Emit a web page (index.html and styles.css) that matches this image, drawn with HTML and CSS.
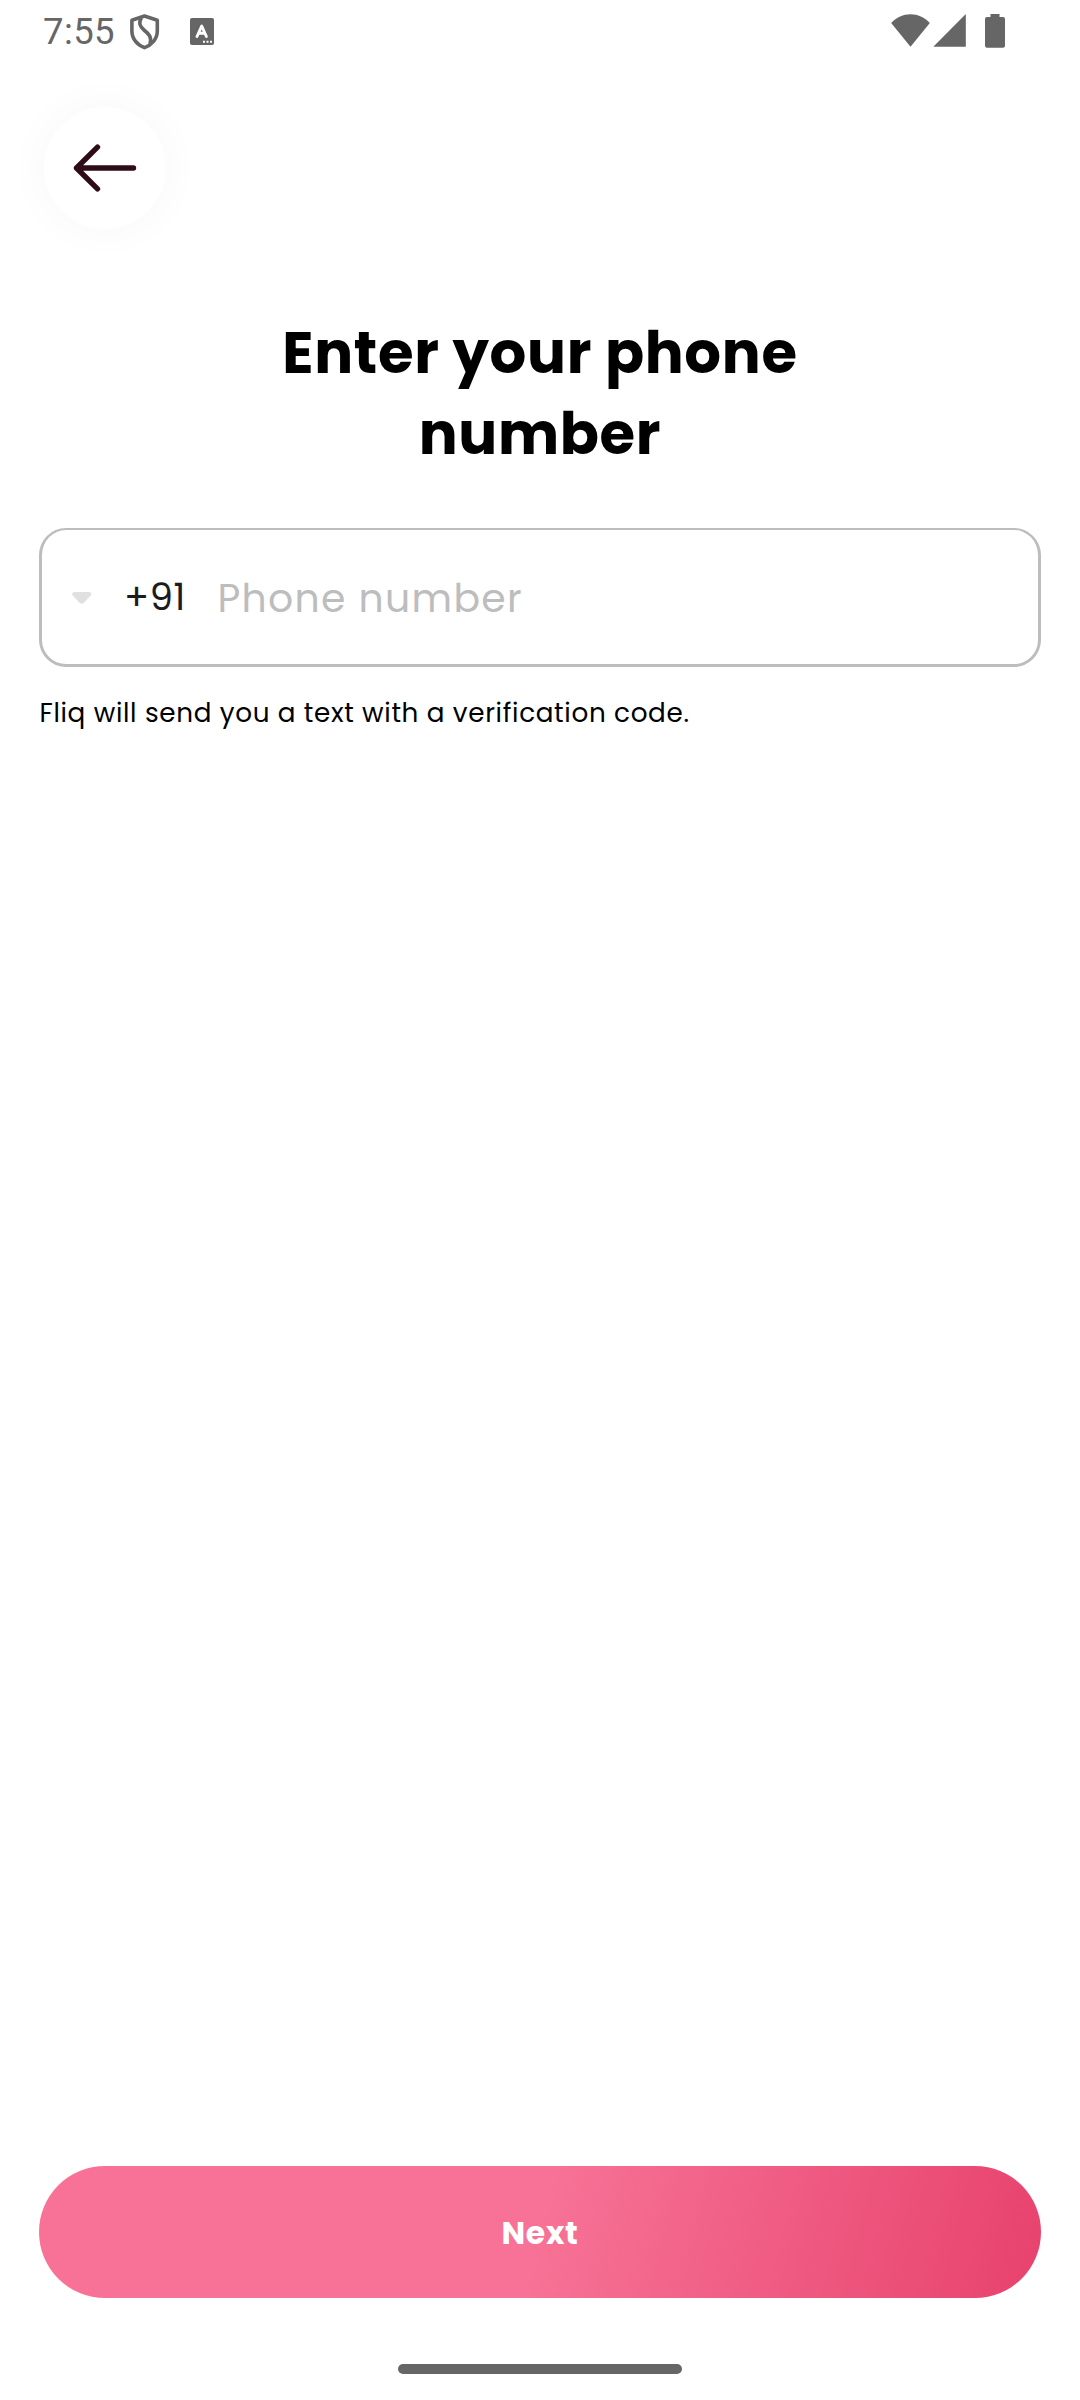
FILE: index.html
```html
<!DOCTYPE html>
<html lang="en">
<head>
<meta charset="utf-8">
<title>Enter your phone number</title>
<link rel="stylesheet" href="styles.css">
</head>
<body>
<div class="screen">
  <header class="status">
    <span class="time">7:55</span>
    <svg class="shield" width="30" height="36" viewBox="0 0 30 36" fill="none" stroke="#666" stroke-width="3.6" stroke-linejoin="round">
      <path d="M14.500 2 27.300 6.200V17C27.300 25 21.500 31.200 14.500 33.600 7.500 31.200 1.900 25 1.900 17V6.200Z"/>
      <path d="M11.500 4C8.500 8 9.500 12.500 14 16 19 20 22 23 20 30"/>
    </svg>
    <svg class="lang" width="24" height="27" viewBox="0 0 24 27">
      <rect width="24" height="27" rx="2" fill="#666"/>
      <path d="M7 18.500 11.700 8 16.400 18.500M9 15.200H14.600" fill="none" stroke="#fff" stroke-width="2.900" stroke-linejoin="round" stroke-linecap="round"/>
      <path d="M13 22.800h2v2h-2zM16.500 22.800h2v2h-2zM20 22.800h2v2h-2z" fill="#fff"/>
    </svg>
    <svg class="signals" width="116" height="35" viewBox="0 0 116 35" fill="#666">
      <path d="M1.200 9C11.500-2.700 29.500-2.700 39.800 9L20.500 32.700Z"/>
      <path d="M43.300 32.700 75.800 0V32.700Z"/>
      <path d="M100.500 0h9v3h3.500a2 2 0 0 1 2 2v26.800a2 2 0 0 1-2 2h-16a2 2 0 0 1-2-2V5a2 2 0 0 1 2-2h3.500z"/>
    </svg>
  </header>

  <button class="back" aria-label="Back">
    <svg width="66" height="50" viewBox="0 0 66 50" fill="none" stroke="#2e0d18" stroke-width="5.400" stroke-linecap="round" stroke-linejoin="round">
      <path d="M61.500 25H4.500M25.500 4.200 4.500 25 25.500 45.800"/>
    </svg>
  </button>

  <main class="content">
    <h1 class="title">Enter your phone<br>number</h1>
    <div class="field">
      <svg class="caret" width="20" height="12" viewBox="0 0 20 12"><path d="M2.500 0h14.500c2.300 0 3 2 1.700 3.600L12 10.700c-1.400 1.400-3 1.400-4.400 0L.8 3.600C-.5 2 .2 0 2.500 0Z" fill="#e0e0e0"/></svg>
      <span class="code">+91</span>
      <span class="placeholder">Phone number</span>
    </div>
    <p class="hint">Fliq will send you a text with a verification code.</p>
  </main>

  <button class="next">Next</button>
  <div class="home"></div>
</div>
</body>
</html>
```
FILE: styles.css
```css
* { box-sizing: border-box; }
body {
  margin: 0;
  background: #fff;
  font-family: Poppins, Inter, sans-serif;
}
.screen {
  width: 1080px;
  height: 2400px;
  display: flex;
  flex-direction: column;
  overflow: hidden;
}
.status {
  display: flex;
  align-items: flex-start;
  height: 107px;
  padding: 14px 74px 0 43px;
}
.time {
  width: 87px;
  font: 36.5px/35px Roboto, sans-serif;
  letter-spacing: 0.4px;
  color: #666;
}
.lang { margin: 4px 0 0 30px; }
.signals { margin-left: auto; }
.back {
  display: flex;
  align-items: center;
  justify-content: center;
  width: 122px;
  height: 122px;
  margin-left: 44px;
  padding: 0;
  border: 0;
  border-radius: 50%;
  background: #fff;
  box-shadow: 0 0 46px rgba(0, 0, 0, 0.035);
}
.content {
  flex: 1;
  padding: 83px 39px 0;
}
.title {
  margin: 0 0 54px;
  font-size: 57.75px;
  font-weight: 700;
  line-height: 81px;
  letter-spacing: 0.66px;
  text-align: center;
  color: #000;
}
.field {
  display: flex;
  align-items: center;
  height: 139px;
  padding-left: 30px;
  border: 2px solid #bdbdbd;
  border-width: 2px 3px 3px;
  border-radius: 27px;
}
.caret { margin-top: 2px; }
.code {
  width: 93.5px;
  margin-left: 32px;
  font-size: 36.75px;
  letter-spacing: 0.66px;
  color: #1d1b20;
}
.placeholder {
  padding-top: 2px;
  font-size: 39.375px;
  letter-spacing: 1.3px;
  color: #bdbdbd;
}
.hint {
  margin: 26px 0 0 0.5px;
  font-size: 26.25px;
  line-height: 40px;
  letter-spacing: 0.66px;
  color: #000;
}
.next {
  height: 132px;
  margin: 0 39px;
  padding: 2px 0 0;
  border: 0;
  border-radius: 66px;
  background: linear-gradient(104deg, #f77296 0%, #f77296 50%, #e7426d 100%);
  font-family: inherit;
  font-size: 31.5px;
  font-weight: 700;
  letter-spacing: 0.66px;
  color: #fff;
}
.home {
  width: 284px;
  height: 10px;
  margin: 66px auto 26px;
  border-radius: 5px;
  background: #666;
}
```
